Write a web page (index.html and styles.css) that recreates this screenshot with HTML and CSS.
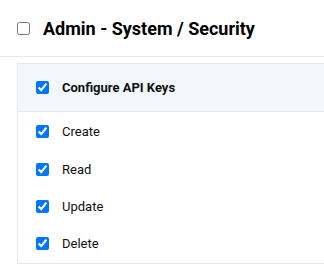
FILE: index.html
```html
<!DOCTYPE html>
<html lang="en">
<head>
    <meta charset="UTF-8">
    <title>Permissions</title>
    <link rel="stylesheet" href="styles.css">
</head>
<body>
    <div class="group-header">
        <input type="checkbox" class="check">
        <h2 class="group-title">Admin - System / Security</h2>
    </div>
    <div class="perm-card">
        <div class="perm-head">
            <input type="checkbox" class="check" checked>
            <span class="perm-name">Configure API Keys</span>
        </div>
        <div class="perm-list">
            <label class="perm-row"><input type="checkbox" class="check" checked><span>Create</span></label>
            <label class="perm-row"><input type="checkbox" class="check" checked><span>Read</span></label>
            <label class="perm-row"><input type="checkbox" class="check" checked><span>Update</span></label>
            <label class="perm-row"><input type="checkbox" class="check" checked><span>Delete</span></label>
        </div>
    </div>
</body>
</html>
```

FILE: styles.css
```css
* {
    margin: 0;
    padding: 0;
    box-sizing: border-box;
}

body {
    background: #fff;
    color: #111;
    font-family: Roboto, "Liberation Sans", sans-serif;
    overflow: hidden;
}

.check {
    width: 13px;
    height: 13px;
    margin: 0;
    flex-shrink: 0;
}

.group-header {
    height: 57px;
    padding-left: 17px;
    display: flex;
    align-items: center;
    gap: 13px;
    border-bottom: 1px solid #e8e9eb;
}

.group-title {
    font-size: 18px;
    font-weight: 700;
    color: #000;
}

.perm-card {
    margin: 6px 0 0 17px;
    border: 1px solid #e6e8eb;
    border-right: none;
}

.perm-head {
    height: 48px;
    padding-left: 18px;
    display: flex;
    align-items: center;
    gap: 13px;
    background: #f3f6fa;
    border-bottom: 1px solid #e6e8eb;
}

.perm-name {
    font-size: 13px;
    font-weight: 700;
}

.perm-list {
    padding-top: 1px;
}

.perm-row {
    height: 37.4px;
    padding-left: 18px;
    display: flex;
    align-items: center;
    gap: 13px;
    font-size: 13px;
}
```
